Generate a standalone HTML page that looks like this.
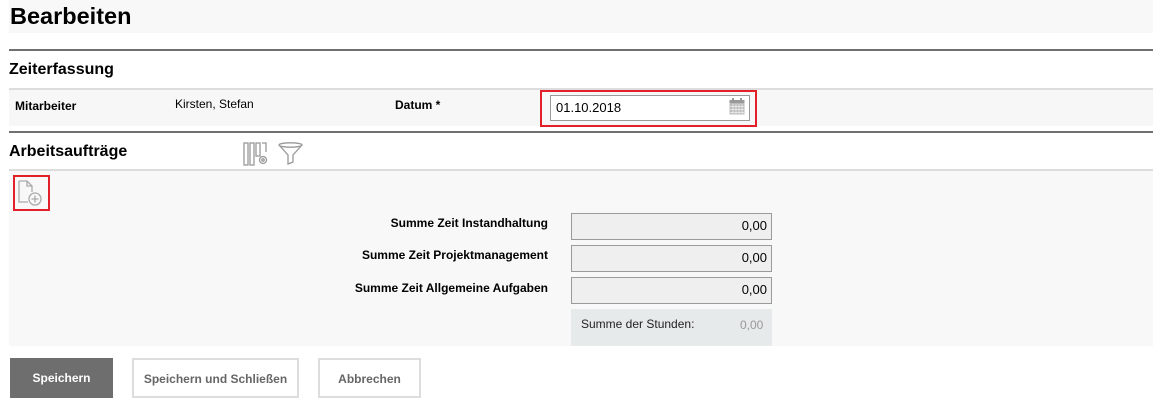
<!DOCTYPE html>
<html><head><meta charset="utf-8"><style>
*{margin:0;padding:0;box-sizing:border-box}
body{width:1158px;height:409px;background:#fff;font-family:"Liberation Sans",Arial,sans-serif;position:relative;overflow:hidden;color:#000}
.a{position:absolute}
.b{font-weight:bold}
.sum{background:#efefef;border:1px solid #9a9a9a;text-align:right;padding-right:4px;font-size:13px;line-height:24px;width:201px;height:27px;left:571px}
.lbl{font-size:12px;font-weight:bold;right:610px;text-align:right}
.btn{height:40px;font-size:12px;font-weight:bold;text-align:center;line-height:38px;top:358px}
</style></head><body>
<div class="a" style="left:9px;top:0;width:1144px;height:33px;background:#f8f8f8"></div>
<div class="a b" style="left:10px;top:3px;font-size:23.5px">Bearbeiten</div>
<div class="a" style="left:9px;top:49px;width:1144px;height:2px;background:#707070"></div>
<div class="a b" style="left:9px;top:61px;font-size:16px">Zeiterfassung</div>
<div class="a" style="left:9px;top:88px;width:1144px;height:38px;background:#f7f7f7;border-top:2px solid #ddd"></div>
<div class="a b" style="left:15px;top:99px;font-size:12px">Mitarbeiter</div>
<div class="a" style="left:175px;top:97px;font-size:12px">Kirsten, Stefan</div>
<div class="a b" style="left:395px;top:98px;font-size:12px">Datum *</div>
<div class="a" style="left:540px;top:90px;width:217px;height:37px;border:2px solid #e2202a"></div>
<div class="a" style="left:550px;top:95px;width:200px;height:26px;border:1px solid #9a9a9a;background:#fff;font-size:13px;line-height:24px;padding-left:5px">01.10.2018</div>
<svg class="a" style="left:729px;top:98px" width="16" height="17" viewBox="0 0 16 17"><rect x="0.5" y="2" width="15" height="14.5" fill="#bbb"/><rect x="0.5" y="2" width="15" height="3" fill="#999"/><rect x="3" y="0" width="2" height="4" fill="#999"/><rect x="11" y="0" width="2" height="4" fill="#999"/><g stroke="#eee" stroke-width="0.8"><path d="M1 8.5H15M1 11.5H15M1 14.5H15M4 6V16M7 6V16M10 6V16M13 6V16"/></g></svg>
<div class="a" style="left:9px;top:131px;width:1144px;height:2px;background:#707070"></div>
<div class="a b" style="left:9px;top:143px;font-size:16px">Arbeitsaufträge</div>
<svg class="a" style="left:243px;top:142px" width="26" height="24" viewBox="0 0 26 24" fill="none" stroke="#999" stroke-width="1.3"><rect x="1" y="1" width="4" height="22"/><rect x="7" y="1" width="4" height="22"/><rect x="13" y="1" width="4" height="13"/><path d="M19 1h4v9"/><circle cx="20" cy="18" r="3.5"/><circle cx="20" cy="18" r="1.2"/></svg>
<svg class="a" style="left:278px;top:142px" width="25" height="23" viewBox="0 0 25 23" fill="none" stroke="#999" stroke-width="1.3"><ellipse cx="12.5" cy="3" rx="11.5" ry="2.2"/><path d="M1 3L10 13V22L15 20V13L24 3"/></svg>
<div class="a" style="left:9px;top:169px;width:1144px;height:177px;background:#f8f8f8;border-top:2px solid #ddd"></div>
<div class="a" style="left:13px;top:175px;width:37px;height:36px;border:2px solid #e2202a"></div>
<svg class="a" style="left:18px;top:180px" width="26" height="27" viewBox="0 0 26 27" fill="none" stroke="#aaa" stroke-width="1.3"><path d="M1 1H9L14 6V12M14 6H9V1M1 1V22H10"/><circle cx="17" cy="19" r="6"/><path d="M17 15.5V22.5M13.5 19H20.5"/></svg>
<div class="a lbl" style="top:216px">Summe Zeit Instandhaltung</div>
<div class="a lbl" style="top:248px">Summe Zeit Projektmanagement</div>
<div class="a lbl" style="top:281px">Summe Zeit Allgemeine Aufgaben</div>
<div class="a sum" style="top:213px">0,00</div>
<div class="a sum" style="top:245px">0,00</div>
<div class="a sum" style="top:277px">0,00</div>
<div class="a" style="left:571px;top:309px;width:201px;height:37px;background:#e6eaea"></div>
<div class="a" style="left:581px;top:317px;font-size:12px;color:#222">Summe der Stunden:</div>
<div class="a" style="left:740px;top:318px;font-size:12px;color:#999">0,00</div>
<div class="a btn" style="left:10px;width:103px;background:#6e6e6e;color:#fff;line-height:40px">Speichern</div>
<div class="a btn" style="left:132px;width:167px;border:2px solid #ddd;color:#666">Speichern und Schließen</div>
<div class="a btn" style="left:318px;width:103px;border:2px solid #ddd;color:#666">Abbrechen</div>
</body></html>
